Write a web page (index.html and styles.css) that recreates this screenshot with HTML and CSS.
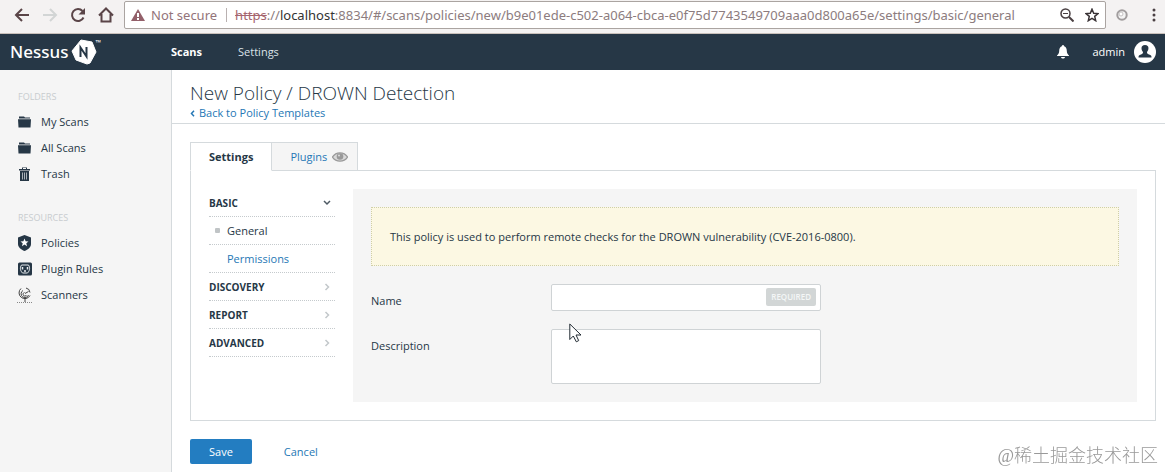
FILE: index.html
```html
<!DOCTYPE html>
<html lang="en">
<head>
<meta charset="utf-8">
<title>Nessus</title>
<link rel="stylesheet" href="styles.css">
</head>
<body>
<div class="browser">
  <button class="tool" aria-label="Back"><svg width="16" height="16" viewBox="0 0 16 16" fill="none" stroke="#5a4548" stroke-width="2"><path d="M15 8H2M8 2L2 8l6 6"/></svg></button>
  <button class="tool" aria-label="Forward"><svg width="16" height="16" viewBox="0 0 16 16" fill="none" stroke="#d2d5d5" stroke-width="2"><path d="M1 8h13M8 2l6 6-6 6"/></svg></button>
  <button class="tool" aria-label="Reload"><svg width="16" height="16" viewBox="0 0 16 16"><path d="M13.500 10.500A6 6 0 1 1 12.500 4" fill="none" stroke="#5a4548" stroke-width="2"/><path d="M15 1v6.500H8.500z" fill="#5a4548"/></svg></button>
  <button class="tool" aria-label="Home"><svg width="16" height="16" viewBox="0 0 16 16" fill="none" stroke="#5a4548" stroke-width="2"><path d="M1 8.500L8 1.500l7 7M3.500 7v7.500h9V7"/></svg></button>
  <div class="address">
    <svg width="14" height="12" viewBox="0 0 14 12"><path d="M7 0l7 12H0z" fill="#93606a"/><path d="M7 4v4M7 9v2" stroke="#fff" stroke-width="2"/></svg>
    <span class="insecure">Not secure</span>
    <span class="url"><s>https</s>://<b>localhost</b>:8834/#/scans/policies/new/b9e01ede-c502-a064-cbca-e0f75d7743549709aaa0d800a65e/settings/basic/general</span>
    <button class="tool small" aria-label="Zoom"><svg width="14" height="14" viewBox="0 0 14 14" fill="none" stroke="#4a4043"><circle cx="5.500" cy="5.500" r="4.500" stroke-width="1.500"/><path d="M9 9l4.500 4.500" stroke-width="2"/><path d="M3 5.500h5"/></svg></button>
    <button class="tool small" aria-label="Bookmark"><svg width="14" height="14" viewBox="0 0 14 14"><path d="M7 1.200l1.700 4 4.300.4-3.300 2.800 1 4.300L7 10.400l-3.700 2.300 1-4.300L1 5.600l4.300-.4z" fill="none" stroke="#3a3336" stroke-width="1.500"/></svg></button>
  </div>
  <button class="tool ext" aria-label="Extension"><svg width="12" height="12" viewBox="0 0 12 12"><circle cx="6" cy="6" r="4.700" fill="#f4f4f4" stroke="#a19d9e" stroke-width="2"/><circle cx="5" cy="5" r="2" fill="#fff" stroke="#c4c1c1"/></svg></button>
  <button class="tool more" aria-label="Menu"><svg width="4" height="14" viewBox="0 0 4 14" fill="#4a4043"><circle cx="2" cy="2" r="1.500"/><circle cx="2" cy="7" r="1.500"/><circle cx="2" cy="12" r="1.500"/></svg></button>
</div>

<header class="topbar">
  <a class="brand" href="#">Nessus<svg width="26" height="26" viewBox="0 0 26 26"><path d="M10 1L21 3l4 10-6 11-3 1-11-4-4-9z" fill="#fff" stroke="#fff" stroke-linejoin="round"/><path d="M9.500 18V8.500l6 9V8" fill="none" stroke="#263746" stroke-width="2"/></svg><span class="tm">™</span></a>
  <nav class="mainnav"><a class="current" href="#">Scans</a><a href="#">Settings</a></nav>
  <div class="user">
    <svg class="bell" width="14" height="14" viewBox="0 0 14 14" fill="#fff"><path d="M7 0c1 0 1 .8 1.200 1.200C10.300 2 10.800 4 10.800 6c0 2.500 1.200 3.500 2.200 4.500V11H1v-.5C2 9.500 3.200 8.500 3.200 6c0-2 .5-4 2.600-4.800C6 .8 6 0 7 0zM5 12h4c-.3 2-3.700 2-4 0z"/></svg>
    <a href="#">admin</a>
    <svg width="22" height="22" viewBox="0 0 22 22"><circle cx="11" cy="11" r="11" fill="#fff"/><path d="M11 4c5 0 3.600 5.500 2 7 0 1.500.4 1.900 2 2.400 2 .6 2.500 1.100 2.500 3.100h-13c0-2 .5-2.500 2.500-3.100 1.600-.5 2-.9 2-2.400-1.600-1.500-3-7 2-7z" fill="#263746"/></svg>
  </div>
</header>

<div class="layout">
  <aside class="sidebar">
    <h2>FOLDERS</h2>
    <ul>
      <li><a href="#"><svg width="14" height="14" viewBox="0 0 14 14" fill="#263746"><path d="M1 3.600V1.500h5L7 2.500h5v1.100zM0 4.300h13l-.5 8.200H.5z"/></svg>My Scans</a></li>
      <li><a href="#"><svg width="14" height="14" viewBox="0 0 14 14" fill="#263746"><path d="M1 3.600V1.500h5L7 2.500h5v1.100zM0 4.300h13l-.5 8.200H.5z"/></svg>All Scans</a></li>
      <li><a href="#"><svg width="14" height="14" viewBox="0 0 14 14"><path d="M1 3.500V2h3V.5h5V2h3v1.500z" fill="#263746"/><path d="M5 1.500h3" stroke="#f5f5f5"/><path d="M2 4h9v10H2z" fill="#263746"/><path d="M4.500 5.500v7M6.500 5.500v7M8.500 5.500v7" stroke="#a9b1b8"/></svg>Trash</a></li>
    </ul>
    <h2>RESOURCES</h2>
    <ul>
      <li><a href="#"><svg width="14" height="16" viewBox="0 0 14 16"><path d="M6.500 0L13 2.500V9c0 3.500-3 5.500-6.500 7C3 14.500 0 12.500 0 9V2.500z" fill="#263746"/><path d="M6.500 3.500l1.100 2.700 2.900.2-2.200 1.900.7 2.900-2.500-1.600L4 11.200l.7-2.900-2.200-1.900 2.900-.2z" fill="#fff"/></svg>Policies</a></li>
      <li><a href="#"><svg width="14" height="14" viewBox="0 0 14 14"><rect y=".5" width="14" height="13" rx="1.500" fill="#263746"/><path d="M3.500 3h7c2 3 1 6-1 8h-5c-2-2-3-5-1-8z" fill="none" stroke="#e8ecef"/><path d="M4.500 5v2.500M9.500 5v2.500M6 9h2" stroke="#e8ecef" stroke-width="1.500"/></svg>Plugin Rules</a></li>
      <li><a href="#"><svg class="dish" width="16" height="16" viewBox="0 0 16 16" fill="none" stroke="#444"><path d="M4 1.500a5.800 5.800 0 1 0 9 7M6 3.500A3.800 3.800 0 1 0 11.500 8M7.500 5.500a1.800 1.800 0 1 0 2 2.500M8 6.500l3.500-2M9 1a5 5 0 0 1 4 4.500M8 12v3"/><path d="M0 15.500h16" stroke="#888" stroke-dasharray="1 1"/></svg>Scanners</a></li>
    </ul>
  </aside>

  <main class="main">
    <div class="pagehead">
      <h1>New Policy / DROWN Detection</h1>
      <a href="#"><svg width="5" height="7" viewBox="0 0 5 7" fill="none" stroke="#2577b5" stroke-width="1.500"><path d="M4 .8L1.500 3.500 4 6.200"/></svg>Back to Policy Templates</a>
    </div>
    <div class="content">
      <div class="tabs">
        <a class="tab active" href="#">Settings</a>
        <a class="tab" href="#">Plugins<svg width="16" height="10" viewBox="0 0 16 10"><path d="M.5 5C4-.5 12-.5 15.500 5 12 10.500 4 10.500.5 5z" fill="#d8d8d8" stroke="#999" stroke-width="1.300"/><circle cx="8" cy="4.500" r="3.300" fill="#999"/><circle cx="7" cy="3.500" r="1" fill="#ddd"/></svg></a>
      </div>
      <div class="panel">
        <nav class="sections">
          <a class="head" href="#">BASIC<svg width="8" height="6" viewBox="0 0 8 6" fill="none" stroke="#4e5a64" stroke-width="1.500"><path d="M1 1l3 3 3-3"/></svg></a>
          <a class="sub selected" href="#">General</a>
          <a class="sub" href="#">Permissions</a>
          <a class="head" href="#">DISCOVERY<svg width="8" height="8" viewBox="0 0 8 8" fill="none" stroke="#c3c8cb" stroke-width="1.500"><path d="M2.500 1l3 3-3 3"/></svg></a>
          <a class="head" href="#">REPORT<svg width="8" height="8" viewBox="0 0 8 8" fill="none" stroke="#c3c8cb" stroke-width="1.500"><path d="M2.500 1l3 3-3 3"/></svg></a>
          <a class="head" href="#">ADVANCED<svg width="8" height="8" viewBox="0 0 8 8" fill="none" stroke="#c3c8cb" stroke-width="1.500"><path d="M2.500 1l3 3-3 3"/></svg></a>
        </nav>
        <form class="form">
          <p class="notice">This policy is used to perform remote checks for the DROWN vulnerability (CVE-2016-0800).</p>
          <div class="row">
            <label for="name">Name</label>
            <div class="field"><input id="name" type="text"><span class="required">REQUIRED</span></div>
          </div>
          <div class="row">
            <label for="description">Description</label>
            <div class="field"><textarea id="description"></textarea>
              <svg class="cursor" width="13" height="20" viewBox="0 0 13 20"><path d="M.8 1v15.500L4.300 13l3 5.800 2.400-1.200L7 12h5z" fill="#fff" stroke="#222b33"/></svg>
            </div>
          </div>
        </form>
      </div>
      <div class="actions"><button class="save" type="button">Save</button><a href="#">Cancel</a></div>
    </div>
  </main>
</div>
<div class="watermark">@稀土掘金技术社区</div>
</body>
</html>
```
FILE: styles.css
```css
* { box-sizing: border-box; }
body {
  margin: 0;
  min-height: 100vh;
  display: flex;
  flex-direction: column;
  font: 11px/18px "Open Sans", "Noto Sans", sans-serif;
  color: #263746;
  background: #fff;
}
a { color: #2577b5; text-decoration: none; }
svg { flex: none; }
h1, h2, p, ul { margin: 0; padding: 0; font-weight: 400; }
ul { list-style: none; }

.browser {
  display: flex;
  align-items: center;
  height: 34px;
  padding: 0 9px 3px 14px;
  background: #f4f2f2;
  border-bottom: 1px solid #c9c0bb;
}
.tool {
  display: flex;
  padding: 0;
  margin-right: 12px;
  border: 0;
  background: none;
}
.address {
  flex: 1;
  min-width: 0;
  display: flex;
  align-items: center;
  height: 28px;
  margin-left: -2px;
  padding: 0 6px;
  border: 1px solid #aaa4a1;
  border-radius: 2px;
  background: #fff;
  font-family: "Noto Sans", sans-serif;
  font-size: 13px;
  line-height: 24px;
  color: #8c7c7e;
  white-space: nowrap;
}
.insecure {
  margin: 0 9px 0 6px;
  color: #93747a;
}
.url {
  flex: 1;
  min-width: 0;
  padding-left: 9px;
  overflow: hidden;
  background: linear-gradient(#b9b1b1, #b9b1b1) 0 5px / 1px 14px no-repeat;
}
.url s { color: #a5656e; }
.url b { font-weight: 400; color: #333; }
.small { margin: 0 0 0 11px; }
.ext { margin: 0 24px 0 10px; }
.more { margin: 0; }

.topbar {
  display: flex;
  align-items: center;
  height: 36px;
  padding: 0 9px 0 10px;
  background: #263746;
}
.topbar a { color: #fff; }
.brand {
  display: flex;
  align-items: center;
  gap: 3px;
  width: 161px;
  font: 500 17px/24px "Noto Sans", sans-serif;
}
.tm {
  align-self: flex-start;
  margin-left: -5px;
  font-size: 7px;
  line-height: 8px;
}
.mainnav { flex: 1; display: flex; gap: 36px; }
.mainnav a { color: #dbe2e8; }
.mainnav .current { font-weight: 700; color: #fff; }
.user { display: flex; align-items: center; }
.bell { margin-right: 22px; }
.user a { margin-right: 9px; }

.layout { flex: 1; display: flex; }
.sidebar {
  flex: none;
  width: 172px;
  padding: 18px;
  background: #f5f5f5;
  border-right: 1px solid #d5dadd;
}
.sidebar h2 {
  font-size: 9px;
  line-height: 18px;
  color: #c8cccf;
}
.sidebar ul { padding-top: 3px; margin-bottom: 22px; }
.sidebar a {
  display: flex;
  align-items: center;
  gap: 9px;
  height: 26px;
  color: #263746;
}
.dish { margin: 0 -1px; }

.main { flex: 1; min-width: 0; }
.pagehead {
  padding: 10px 18px 3px;
  border-bottom: 1px solid #d5dadd;
}
.pagehead h1 {
  font-size: 19px;
  line-height: 26px;
  font-weight: 300;
}
.pagehead a {
  display: flex;
  align-items: center;
  gap: 4px;
  line-height: 14px;
}
.content { padding: 18px 9px 8px 18px; }
.tabs { display: flex; position: relative; z-index: 1; }
.tab {
  display: flex;
  align-items: center;
  gap: 5px;
  height: 29px;
  padding: 0 9px 0 18px;
  border: 1px solid #d5dadd;
  border-left: 0;
  background: #f5f5f5;
}
.tab.active {
  padding: 0 18px;
  border-left: 1px solid #d5dadd;
  border-bottom-color: #fff;
  background: #fff;
  color: #263746;
  font-weight: 700;
}
.panel {
  display: flex;
  gap: 18px;
  margin-top: -1px;
  padding: 18px;
  border: 1px solid #d5dadd;
}
.sections { flex: none; width: 126px; }
.sections a {
  display: flex;
  align-items: center;
  justify-content: space-between;
  height: 28px;
  border-bottom: 1px dotted #c5cacd;
}
.sections .head {
  padding-right: 4px;
  font-size: 10px;
  font-weight: 700;
  color: #263746;
}
.sections .sub {
  justify-content: flex-start;
  padding-left: 18px;
}
.sections .selected {
  padding-left: 6px;
  gap: 7px;
  color: #263746;
}
.selected::before {
  content: "";
  width: 5px;
  height: 5px;
  border-radius: 1px;
  background: #c0c4c6;
}
.form {
  flex: 1;
  min-width: 0;
  display: flex;
  flex-direction: column;
  gap: 18px;
  padding: 18px;
  background: #f5f5f5;
}
.notice {
  padding: 19px 18px;
  border: 1px dotted #cfcfa8;
  background: #fcf8e3;
  line-height: 19px;
}
.row { display: flex; }
.row label { flex: none; width: 180px; padding-top: 8px; }
.field { position: relative; width: 270px; display: flex; }
.field input, .field textarea {
  width: 100%;
  height: 27px;
  border: 1px solid #cfd3d5;
  border-radius: 2px;
  background: #fff;
  resize: none;
}
.field textarea { height: 55px; }
.required {
  position: absolute;
  top: 4px;
  right: 5px;
  padding: 0 5px;
  border-radius: 2px;
  background: #d2d6d6;
  color: #f4f6f6;
  font-size: 8px;
  line-height: 18px;
  font-weight: 600;
}
.cursor { position: absolute; left: 18px; top: -6px; }
.actions {
  display: flex;
  align-items: center;
  gap: 32px;
  padding-top: 18px;
}
.save {
  height: 25px;
  padding: 0 19px;
  border: 0;
  border-radius: 2px;
  background: #237dc1;
  color: #fff;
  font: inherit;
}
.watermark {
  position: fixed;
  right: 7px;
  bottom: 3px;
  font: 18px/26px "Liberation Serif", "Noto Sans CJK SC", sans-serif;
  font-weight: 300;
  color: #999;
}
```
